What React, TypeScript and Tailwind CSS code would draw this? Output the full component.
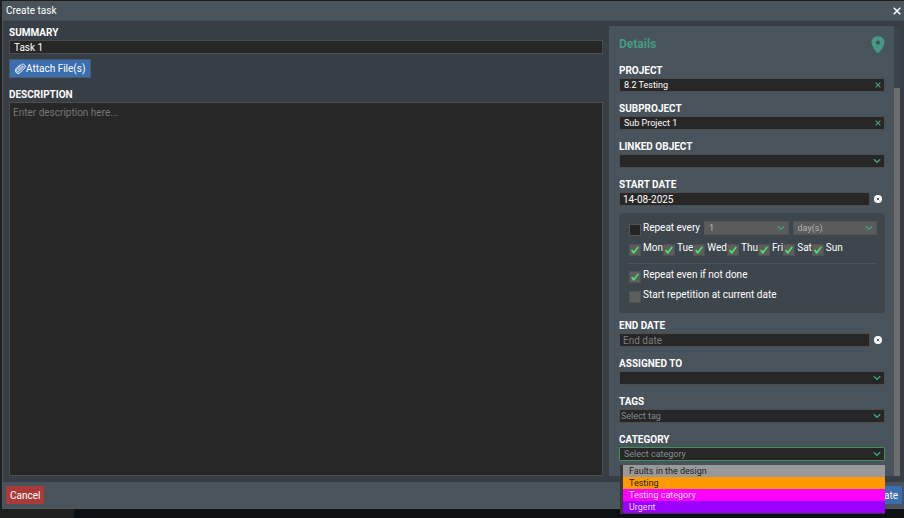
import type { ReactNode } from 'react'

const days = ['Mon', 'Tue', 'Wed', 'Thu', 'Fri', 'Sat', 'Sun']

const categories = [
  { name: 'Faults in the design', style: 'bg-[#999999] text-[#222222]' },
  { name: 'Testing', style: 'bg-[#ff9900] text-[#222222]' },
  { name: 'Testing category', style: 'bg-[#ff00ff] text-[#f3dcf3]' },
  { name: 'Urgent', style: 'bg-[#9900ff] text-[#e6d8f5]' },
]

const fieldStyle = 'block w-full h-[14px] border border-[#4d4d4d] bg-[#272727] placeholder:text-[#7d7d7d] outline-none'
const labelStyle = 'block text-[10px] leading-[15px] font-bold uppercase text-white'

function Chevron() {
  return (
    <svg viewBox="0 0 8 5" className="pointer-events-none absolute right-1 top-1/2 -translate-y-1/2 w-2 h-[5px]" fill="none" stroke="#3f9c86" strokeWidth="1.5">
      <path d="M0.8 0.8 4 3.8 7.2 0.8" />
    </svg>
  )
}

function Cross() {
  return (
    <svg viewBox="0 0 6 6" className="w-1.5 h-1.5" fill="none" stroke="#3f9c86" strokeWidth="1.2">
      <path d="M0.6 0.6 5.4 5.4M5.4 0.6 0.6 5.4" />
    </svg>
  )
}

function Field({ id, label, children }: { id: string; label: string; children: ReactNode }) {
  return (
    <div>
      <label htmlFor={id} className={labelStyle}>{label}</label>
      <div className="relative">{children}</div>
    </div>
  )
}

function Picked({ id, label, value }: { id: string; label: string; value: string }) {
  return (
    <Field id={id} label={label}>
      <input id={id} type="text" defaultValue={value} className={`${fieldStyle} pl-1 pr-4 pb-px text-[9px] text-white`} />
      <button aria-label={`Clear ${label}`} className="absolute right-1 top-0 h-full flex items-center"><Cross /></button>
    </Field>
  )
}

function Dropdown({ id, label, placeholder = '' }: { id: string; label: string; placeholder?: string }) {
  return (
    <Field id={id} label={label}>
      <select id={id} className={`${fieldStyle} appearance-none pl-px pr-4 text-[9px] leading-3 text-[#838990]`}>
        <option>{placeholder}</option>
      </select>
      <Chevron />
    </Field>
  )
}

function DateField({ id, label, value }: { id: string; label: string; value?: string }) {
  return (
    <div>
      <label htmlFor={id} className={labelStyle}>{label}</label>
      <div className="flex items-center">
        <input id={id} type="text" defaultValue={value} placeholder="End date" className={`${fieldStyle} pl-[3px] text-[10px] text-white flex-1`} />
        <button aria-label={`Clear ${label}`} className="ml-1 mr-[3px]">
          <svg viewBox="0 0 8 8" className="w-2 h-2">
            <circle cx="4" cy="4" r="4" fill="#fff" />
            <path d="M2.7 2.7 5.3 5.3M5.3 2.7 2.7 5.3" stroke="#3c444c" strokeWidth="0.9" />
          </svg>
        </button>
      </div>
    </div>
  )
}

function Check({ label, checked = false, dark = false }: { label: string; checked?: boolean; dark?: boolean }) {
  return (
    <label className="flex items-end gap-0.5 text-[10px] leading-[14px] text-white whitespace-nowrap">
      <span className="relative block w-3 h-3 shrink-0">
        <input
          type="checkbox"
          defaultChecked={checked}
          className={`peer appearance-none block w-3 h-3 border border-[#505356] ${dark ? 'bg-[#252525]' : 'bg-[#5d5d5d]'}`}
        />
        <svg viewBox="0 0 12 12" className="hidden peer-checked:block pointer-events-none absolute inset-0" fill="#4be36c">
          <path d="M2 6.6 3.3 5.6 4.900 7.200 8.600 2.600 9.900 3.200 5.600 9.300 4.300 9.700Z" />
        </svg>
      </span>
      <span className="pb-px">{label}</span>
    </label>
  )
}

function RepeatSelect({ label, value }: { label: string; value: string }) {
  return (
    <div className="relative flex-1">
      <select aria-label={label} className="appearance-none block w-full h-[14px] pl-1 border border-[#525659] bg-[#5b5b5b] text-[9px] leading-3 text-[#b4b4b4]">
        <option>{value}</option>
      </select>
      <Chevron />
    </div>
  )
}

function RepeatBox() {
  return (
    <div className="mt-[7px] mb-[5px] rounded-sm bg-[#3d454d] h-[100px] px-2 pt-2">
      <div className="flex items-start pl-0.5">
        <div className="w-[75px]"><Check label="Repeat every" dark /></div>
        <div className="flex flex-1 gap-1">
          <RepeatSelect label="Repeat interval" value="1" />
          <RepeatSelect label="Repeat unit" value="day(s)" />
        </div>
      </div>
      <div className="flex pl-0.5 mt-[5px] pb-[7px] border-b border-[#4c5257]">
        {days.map((day) => <Check key={day} label={day} checked />)}
      </div>
      <div className="flex flex-col gap-[5px] pl-0.5 pt-1">
        <Check label="Repeat even if not done" checked />
        <Check label="Start repetition at current date" />
      </div>
    </div>
  )
}

function Details() {
  return (
    <aside className="flex shrink-0 w-[291px] mt-px bg-[#3a424a]">
      <div className="flex-1 bg-[#48535b] pl-2.5 pr-[9px] pt-2.5">
        <div className="flex items-start justify-between h-[27px]">
          <h2 className="text-[12px] leading-[17px] font-bold text-[#459a86]">Details</h2>
          <svg viewBox="0 0 14 18" className="w-3.5 h-[18px]" fill="#459a86">
            <path fillRule="evenodd" d="M7 0.2C3.3 0.2 0.5 3 0.5 6.6 0.5 11 7 17.6 7 17.6S13.5 11 13.5 6.6C13.5 3 10.7 0.2 7 0.2ZM7 4.4A2.2 2.2 0 1 1 7 8.8 2.2 2.2 0 0 1 7 4.4Z" />
          </svg>
        </div>
        <div className="flex flex-col gap-[9px]">
          <Picked id="project" label="Project" value="8.2 Testing" />
          <Picked id="subproject" label="Subproject" value="Sub Project 1" />
          <Dropdown id="linked" label="Linked object" />
          <DateField id="start" label="Start date" value="14-08-2025" />
        </div>
        <RepeatBox />
        <div className="flex flex-col gap-[9px]">
          <DateField id="end" label="End date" />
          <Dropdown id="assigned" label="Assigned to" />
          <Dropdown id="tags" label="Tags" placeholder="Select tag" />
          <Field id="category" label="Category">
            <input
              id="category"
              type="text"
              role="combobox"
              aria-expanded="true"
              aria-controls="category-list"
              placeholder="Select category"
              className="block w-full h-[14px] rounded-[1px] border border-[#3f9156] bg-[#272727] pl-1 text-[9px] text-white placeholder:text-[#858b92] outline-none"
            />
            <Chevron />
            <ul id="category-list" role="listbox" className="absolute z-10 left-px right-0 top-full mt-1 border-l-[3px] border-b border-[#38383a]">
              {categories.map((c) => (
                <li key={c.name} role="option" aria-selected="false" className={`pl-1.5 text-[9px] leading-3 ${c.style}`}>{c.name}</li>
              ))}
            </ul>
          </Field>
        </div>
      </div>
      {/* Scrollbar */}
      <div className="w-1.5 flex flex-col pt-[62px]">
        <div className="flex-1 bg-[#6d6d6d]" />
      </div>
    </aside>
  )
}

export default function App() {
  return (
    <div className="h-screen flex flex-col overflow-hidden bg-[#1f1f1f] pl-0.5 pt-px font-[Roboto,sans-serif] text-white">
      <div className="flex-1 min-h-0 flex flex-col border-l border-b border-[#50565a] bg-[#373e46]">
        <header className="flex items-center justify-between h-5 shrink-0 bg-[#48535b] border-b border-[#454b50] pl-[3px] pr-[3px]">
          <h1 className="text-[10px] leading-4">Create task</h1>
          <button aria-label="Close">
            <svg viewBox="0 0 8 8" className="w-2 h-2" fill="none" stroke="#fff" strokeWidth="1.5">
              <path d="M0.7 0.7 7.3 7.3M7.3 0.7 0.7 7.3" />
            </svg>
          </button>
        </header>

        <main className="flex-1 min-h-0 flex gap-1.5 pl-1.5 pr-1 pt-1 pb-1.5">
          <section className="flex-1 flex flex-col">
            <label htmlFor="summary" className={labelStyle}>Summary</label>
            <input id="summary" type="text" defaultValue="Task 1" className={`${fieldStyle} pl-1 text-[10px] text-white`} />
            <button className="self-start flex items-center mt-[5px] h-[19px] px-[5px] border border-[#4b5a6b] bg-[#3a6eae] text-[10px]">
              <svg viewBox="20 30 470 470" className="w-[11px] h-[11px]" fill="none" stroke="#fff" strokeWidth="42" strokeLinecap="round" strokeLinejoin="round">
                <path d="M165 335 325 172C355 145 392 185 366 212L190 392C130 450 45 365 103 305L293 110C384 18 520 158 430 248L237 445C138 545-33 390 64 275L225 112" />
              </svg>
              Attach File(s)
            </button>
            <label htmlFor="description" className={`${labelStyle} mt-[9px]`}>Description</label>
            <textarea
              id="description"
              placeholder="Enter description here..."
              className="flex-1 resize-none border border-[#4d4d4d] bg-[#272727] px-[3px] py-[3px] text-[10px] leading-[14px] placeholder:text-[#757575] outline-none"
            />
          </section>
          <Details />
        </main>

        <footer className="flex items-center justify-between h-[26px] shrink-0 bg-[#48535b] pl-[3px] pr-0.5">
          <button className="h-[18px] px-1 bg-[#aa3a3a] text-[10px]">Cancel</button>
          <button className="h-[18px] px-1 bg-[#3a6eae] text-[10px]">Create</button>
        </footer>
      </div>
      <div className="h-[9px] shrink-0 ml-[72px] bg-[#0d1012]" />
    </div>
  )
}
